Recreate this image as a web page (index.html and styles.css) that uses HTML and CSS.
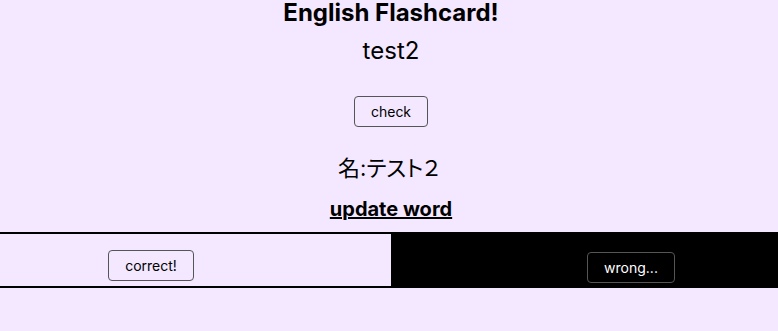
FILE: index.html
```html
<!DOCTYPE html>
<html lang="ja">
<head>
<meta charset="utf-8">
<title>English Flashcard!</title>
<link rel="stylesheet" href="styles.css">
</head>
<body>
<main class="app">
  <h1 class="title">English Flashcard!</h1>
  <p class="word">test2</p>
  <button class="btn btn-check" type="button">check</button>
  <p class="meaning">名:テスト２</p>
  <a class="update" href="#">update word</a>
  <div class="judge">
    <div class="half half-correct"><button class="btn" type="button">correct!</button></div>
    <div class="half half-wrong"><button class="btn btn-dark" type="button">wrong...</button></div>
  </div>
</main>
</body>
</html>
```
FILE: styles.css
```css
html, body {
  margin: 0;
  padding: 0;
  background: #f3e8ff;
  color: #000;
  font-family: Inter, "Noto Sans CJK JP", sans-serif;
}

.app {
  display: flex;
  flex-direction: column;
  align-items: center;
  overflow: hidden;
  min-height: 331px;
  padding-left: 4px;
  box-sizing: border-box;
}

.title {
  margin: 0;
  font-size: 24px;
  line-height: 25px;
  font-weight: 700;
}

.word {
  margin: 14px 0 0;
  font-size: 24px;
  line-height: 24px;
}

.btn {
  font-family: Inter, sans-serif;
  font-size: 14px;
  line-height: 17px;
  padding: 6px 16px;
  border: 1px solid #555;
  border-radius: 4px;
  background: transparent;
  color: #000;
}

.btn-check {
  margin-top: 33px;
}

.meaning {
  margin: 26px 4px 0 0;
  font-family: Inter, "Noto Sans CJK JP", sans-serif;
  font-size: 22px;
  line-height: 30px;
  font-feature-settings: "palt";
}

.update {
  margin-top: 14px;
  font-size: 20px;
  line-height: 24px;
  font-weight: 700;
  color: #000;
  text-decoration: underline;
}

.judge {
  display: flex;
  width: 960px;
  margin-top: 11px;
  flex-shrink: 0;
}

.half {
  flex: 0 0 480px;
  height: 56px;
  box-sizing: border-box;
  display: flex;
  justify-content: center;
  align-items: flex-start;
}

.half-correct {
  border: 2px solid #000;
  border-right: 0;
  padding-top: 16px;
  padding-right: 2px;
}

.half-wrong {
  background: #000;
  padding-top: 20px;
}

.btn-dark {
  color: #fff;
  border-color: #555;
}
```
